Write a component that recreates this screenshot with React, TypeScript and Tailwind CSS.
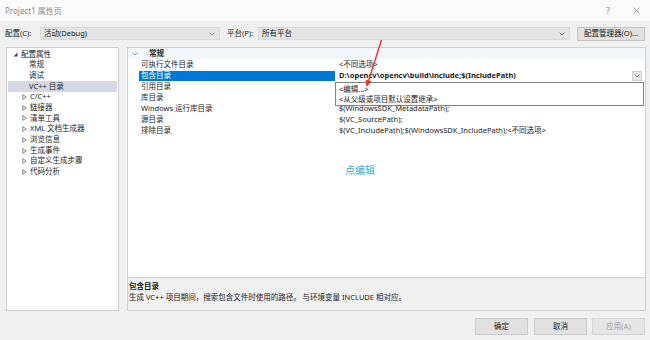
import React from "react";

const Chev = ({ className = "" }: { className?: string }) => (
  <svg className={className} width="6" height="4" viewBox="0 0 6 4">
    <path d="M0.5 0.5 L3 3 L5.5 0.5" fill="none" stroke="#8a8a8a" strokeWidth="0.9" />
  </svg>
);

const Collapsed = () => (
  <svg width="5" height="6" viewBox="0 0 5 6" className="mr-[3px]">
    <path d="M0.8 0.6 L4.2 3 L0.8 5.4 Z" fill="none" stroke="#6a6a6a" strokeWidth="0.8" />
  </svg>
);

const Expanded = () => (
  <svg width="5" height="5" viewBox="0 0 5 5" className="mr-[3px]">
    <path d="M0.5 4.5 L4.5 4.5 L4.5 0.5 Z" fill="#444" />
  </svg>
);

const tree: { label: string; level: 0 | 1 | 2; sel?: boolean }[] = [
  { label: "配置属性", level: 0 },
  { label: "常规", level: 1 },
  { label: "调试", level: 1 },
  { label: "VC++ 目录", level: 1, sel: true },
  { label: "C/C++", level: 2 },
  { label: "链接器", level: 2 },
  { label: "清单工具", level: 2 },
  { label: "XML 文档生成器", level: 2 },
  { label: "浏览信息", level: 2 },
  { label: "生成事件", level: 2 },
  { label: "自定义生成步骤", level: 2 },
  { label: "代码分析", level: 2 },
];

const rows: { name: string; value: string; sel?: boolean }[] = [
  { name: "可执行文件目录", value: "<不同选项>" },
  { name: "包含目录", value: "D:\\opencv\\opencv\\build\\include;$(IncludePath)", sel: true },
  { name: "引用目录", value: "" },
  { name: "库目录", value: "" },
  { name: "Windows 运行库目录", value: "$(WindowsSDK_MetadataPath);" },
  { name: "源目录", value: "$(VC_SourcePath);" },
  { name: "排除目录", value: "$(VC_IncludePath);$(WindowsSDK_IncludePath);<不同选项>" },
];

export default function App() {
  return (
    <div className="relative w-[650px] h-[340px] overflow-hidden bg-[#f0f0f0] text-[7.5px] text-[#1b1b1b] font-['Noto_Sans','Noto_Sans_CJK_SC',sans-serif] leading-none">
      {/* title bar */}
      <div className="h-[21px] bg-[#fbfbfb] flex items-center pl-[5px] pr-[10px]">
        <span className="text-[8px] text-[#8c8c8c]">Project1 属性页</span>
        <span className="ml-auto text-[9px] text-[#8c8c8c]">?</span>
        <svg className="ml-[23px]" width="7" height="7" viewBox="0 0 7 7">
          <path d="M0.5 0.5 L6.5 6.5 M6.5 0.5 L0.5 6.5" stroke="#8c8c8c" strokeWidth="0.8" />
        </svg>
      </div>

      {/* toolbar */}
      <div className="mt-[6px] h-[13px] flex items-center pl-[5px]">
        <span className="w-[35px]">配置(C):</span>
        <div className="w-[180px] h-[13px] bg-[#e4e4e4] border border-[#dadada] flex items-center pl-[3px] pr-[4px]">
          <span>活动(Debug)</span>
          <Chev className="ml-auto" />
        </div>
        <span className="ml-[7px] w-[31px]">平台(P):</span>
        <div className="w-[312px] h-[13px] bg-[#e4e4e4] border border-[#dadada] flex items-center pl-[3px] pr-[4px]">
          <span>所有平台</span>
          <Chev className="ml-auto" />
        </div>
        <div className="ml-[7px] w-[68px] h-[14px] bg-[#e1e1e1] border border-[#c4c4c4] flex items-center justify-center">
          配置管理器(O)...
        </div>
      </div>

      {/* main */}
      <div className="mt-[7px] h-[264px] flex">
        <div className="ml-[6px] w-[113px] bg-white border border-[#d0d0d0] pt-[1px]">
          {tree.map((t) => (
            <div
              key={t.label}
              className={`h-[10.7px] flex items-center ${t.sel ? "bg-[#d6d8e3] mx-[1px]" : ""} ${
                t.level === 0 ? "pl-[6px]" : t.level === 1 ? (t.sel ? "pl-[21px]" : "pl-[22px]") : "pl-[15px]"
              }`}
            >
              {t.level === 0 && <Expanded />}
              {t.level === 2 && <Collapsed />}
              <span>{t.label}</span>
            </div>
          ))}
        </div>

        <div className="ml-[8px] w-[519px] border border-[#d0d0d0] flex flex-col">
          <div className="relative h-[229px] bg-white">
            <div className="h-[11px] flex items-center bg-[#f3f6fa] pl-[4px]">
              <Chev />
              <span className="ml-[11px] font-bold">常规</span>
            </div>
            {rows.map((r) => (
              <div key={r.name} className="h-[11px] flex items-center">
                <div className="w-[208px] h-full flex items-center">
                  {r.sel ? (
                    <div className="ml-[11px] w-[196px] h-[10px] bg-[#0078d7] text-white flex items-center pl-[2px]">
                      {r.name}
                    </div>
                  ) : (
                    <span className="ml-[13px]">{r.name}</span>
                  )}
                </div>
                <div className="flex-1 h-full flex items-center pl-[3px] pr-[3px]">
                  <span className={r.sel ? "font-bold" : ""}>{r.value}</span>
                  {r.sel && (
                    <div className="ml-auto w-[10px] h-[10px] bg-[#e6e6e6] border border-[#cfcfcf] flex items-center justify-center">
                      <Chev />
                    </div>
                  )}
                </div>
              </div>
            ))}

            {/* dropdown popup */}
            <div className="absolute top-[34px] left-[207px] w-[309px] h-[24px] bg-white border border-[#828282] pl-[3px] pt-[1px]">
              <div className="h-[10.5px] flex items-center">&lt;编辑...&gt;</div>
              <div className="h-[10.5px] flex items-center">&lt;从父级或项目默认设置继承&gt;</div>
            </div>
          </div>
          <div className="flex-1 bg-[#f0f0f0] border-t border-[#d0d0d0] pl-[1px] pt-[3px]">
            <div className="h-[11px] flex items-center font-bold">包含目录</div>
            <div className="h-[11px] flex items-center">
              生成 VC++ 项目期间，搜索包含文件时使用的路径。 与环境变量 INCLUDE 相对应。
            </div>
          </div>
        </div>
      </div>

      {/* buttons */}
      <div className="mt-[7px] h-[17px] flex">
        <div className="ml-[475px] w-[53px] h-full bg-[#e1e1e1] border border-[#cccccc] flex items-center justify-center">
          确定
        </div>
        <div className="ml-[6px] w-[53px] h-full bg-[#e1e1e1] border border-[#cccccc] flex items-center justify-center">
          取消
        </div>
        <div className="ml-[5px] w-[53px] h-full bg-[#e6e6e6] border border-[#d6d6d6] text-[#a3a3a3] flex items-center justify-center">
          应用(A)
        </div>
      </div>

      {/* annotation overlay */}
      <svg className="absolute left-0 top-0 pointer-events-none" width="650" height="340" viewBox="0 0 650 340">
        <line x1="381.5" y1="40" x2="368.5" y2="81" stroke="#e5332a" strokeWidth="1.4" />
        <polygon points="366.5,87 365.5,79.5 371.5,81.5" fill="#e5332a" />
      </svg>
      <div className="absolute left-[345px] top-[165px] text-[10px] text-[#3fa7c2]">点编辑</div>
    </div>
  );
}
